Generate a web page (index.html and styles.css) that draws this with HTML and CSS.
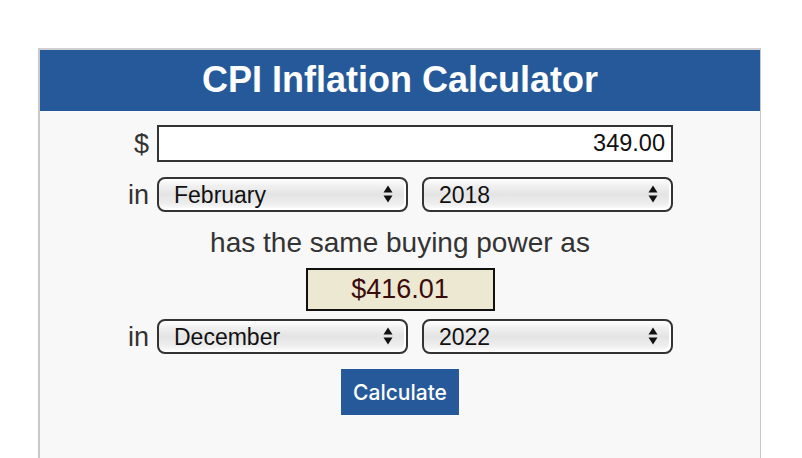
FILE: index.html
```html
<!DOCTYPE html>
<html>
<head>
<meta charset="utf-8">
<link rel="stylesheet" href="styles.css">
</head>
<body>
<div class="calc">
  <div class="calc-head">CPI Inflation Calculator</div>
  <div class="calc-body">
    <div class="row">
      <span class="lbl">$</span>
      <input class="amount" type="text" value="349.00">
    </div>
    <div class="row row-sel">
      <span class="lbl">in</span>
      <div class="sel">
        <select><option>February</option></select>
        <svg class="arr" width="10" height="18" viewBox="0 0 10 18"><path d="M5 0.5 L9.5 7.5 H0.5 Z M5 17.5 L9.5 10.5 H0.5 Z" fill="#111111"/></svg>
      </div>
      <div class="sel">
        <select><option>2018</option></select>
        <svg class="arr" width="10" height="18" viewBox="0 0 10 18"><path d="M5 0.5 L9.5 7.5 H0.5 Z M5 17.5 L9.5 10.5 H0.5 Z" fill="#111111"/></svg>
      </div>
    </div>
    <div class="same">has the same buying power as</div>
    <div class="result">$416.01</div>
    <div class="row row-sel2">
      <span class="lbl">in</span>
      <div class="sel">
        <select><option>December</option></select>
        <svg class="arr" width="10" height="18" viewBox="0 0 10 18"><path d="M5 0.5 L9.5 7.5 H0.5 Z M5 17.5 L9.5 10.5 H0.5 Z" fill="#111111"/></svg>
      </div>
      <div class="sel">
        <select><option>2022</option></select>
        <svg class="arr" width="10" height="18" viewBox="0 0 10 18"><path d="M5 0.5 L9.5 7.5 H0.5 Z M5 17.5 L9.5 10.5 H0.5 Z" fill="#111111"/></svg>
      </div>
    </div>
    <button class="btn" type="button">Calculate</button>
  </div>
</div>
</body>
</html>
```

FILE: styles.css
```css
html, body {
  margin: 0;
  padding: 0;
  background: #ffffff;
}
body {
  font-family: "Liberation Sans", Arial, sans-serif;
  padding-top: 48px;
}
.calc {
  margin-left: 38px;
  width: 720px;
  border-top: 2px solid #cfcfcf;
  border-left: 2px solid #c8c8c8;
  border-right: 1px solid #c8c8c8;
  background: #f8f8f8;
  min-height: 420px;
}
.calc-head {
  background: #25599a;
  color: #ffffff;
  font-weight: bold;
  font-size: 36px;
  height: 61px;
  line-height: 60px;
  text-align: center;
}
.calc-body {
  display: flex;
  flex-direction: column;
  align-items: center;
}
.row {
  display: flex;
  align-items: center;
  margin-top: 14px;
  width: 546px;
}
.row-sel { margin-top: 15px; }
.row-sel2 { margin-top: 8px; }
.lbl {
  width: 22px;
  margin-right: 8px;
  text-align: right;
  font-size: 27px;
  color: #333333;
  line-height: 30px;
}
.amount {
  box-sizing: border-box;
  width: 516px;
  height: 37px;
  border: 2px solid #333333;
  background: #ffffff;
  text-align: right;
  font-family: "Liberation Sans", Arial, sans-serif;
  font-size: 23.5px;
  color: #111111;
  padding: 0 6px 0 4px;
  margin: 0;
  outline: none;
}
.sel {
  position: relative;
  width: 251px;
  height: 35px;
}
.sel + .sel { margin-left: 14px; }
.sel select {
  -webkit-appearance: none;
  appearance: none;
  box-sizing: border-box;
  width: 100%;
  height: 100%;
  margin: 0;
  border: 2px solid #333333;
  border-radius: 8px;
  background: linear-gradient(to bottom, #ffffff 0%, #f0f0f0 22%, #e4e4e4 50%, #eeeeee 80%, #ffffff 100%);
  font-family: "Liberation Sans", Arial, sans-serif;
  font-size: 23px;
  color: #111111;
  padding: 0 0 0 15px;
  box-shadow: inset -2px -2px 1px #ffffff;
}
.sel .arr {
  position: absolute;
  right: 15px;
  top: 8px;
  pointer-events: none;
}
.same {
  margin-top: 15px;
  font-size: 28px;
  line-height: 32px;
  color: #333333;
}
.result {
  box-sizing: border-box;
  margin-top: 9px;
  width: 189px;
  height: 43px;
  border: 2px solid #111111;
  background: #ede8d2;
  color: #3a0b0b;
  font-size: 27px;
  line-height: 39px;
  text-align: center;
}
.btn {
  margin-top: 15px;
  width: 118px;
  height: 46px;
  border: none;
  background: #25599a;
  color: #ffffff;
  font-family: Inter, "Liberation Sans", sans-serif;
  font-size: 21px;
  font-weight: 500;
  padding: 0;
}
```
